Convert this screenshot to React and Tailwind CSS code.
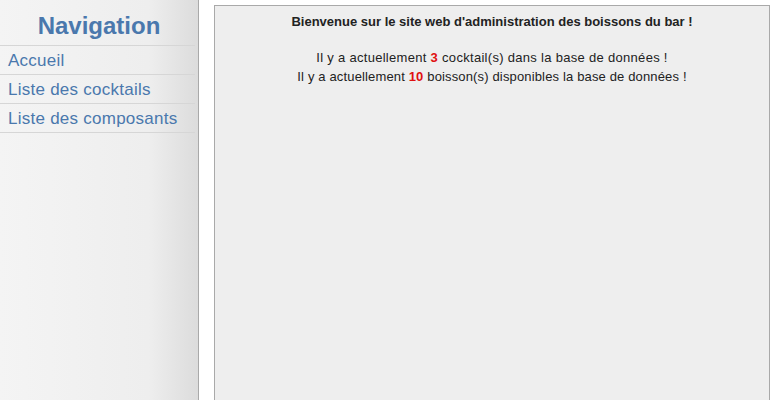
import React from 'react';

const links = ['Accueil', 'Liste des cocktails', 'Liste des composants'];

export default function App() {
    return (
        <div className="flex w-[782px] h-[400px] bg-white overflow-hidden" style={{ fontFamily: '"Liberation Sans", Arial, sans-serif' }}>
            <div className="w-[199px] h-full shrink-0 border-r border-[#a9a9a9] bg-gradient-to-r from-[#f4f4f4] via-[#eeeeee] via-75% to-[#dcdcdc]">
                <h1 className="h-[45px] flex items-center justify-center text-[24px] font-bold text-[#4a78ad] pt-[7px]">Navigation</h1>
                <ul className="border-t border-[#d6d6d6] mr-[3px]">
                    {links.map(l => (
                        <li key={l} className="h-[29px] flex items-center pl-[8px] border-b border-[#d6d6d6] text-[17px] tracking-[0.25px] text-[#4a78ad] pt-[1px]">{l}</li>
                    ))}
                </ul>
            </div>
            <div className="ml-[15px] mt-[5px] w-[556px] h-[420px] border border-[#a9a9a9] bg-[#eeeeee] text-[13px] text-[#222] text-center">
                <p className="font-bold mt-[6px] leading-[19px]">Bienvenue sur le site web d'administration des boissons du bar !</p>
                <div className="mt-[17px]">
                    <p className="leading-[19px] tracking-[0.3px]">Il y a actuellement <b className="text-[#e01010]">3</b> cocktail(s) dans la base de données !</p>
                    <p className="leading-[19px] tracking-[0.15px]">Il y a actuellement <b className="text-[#e01010]">10</b> boisson(s) disponibles la base de données !</p>
                </div>
            </div>
        </div>
    );
}
